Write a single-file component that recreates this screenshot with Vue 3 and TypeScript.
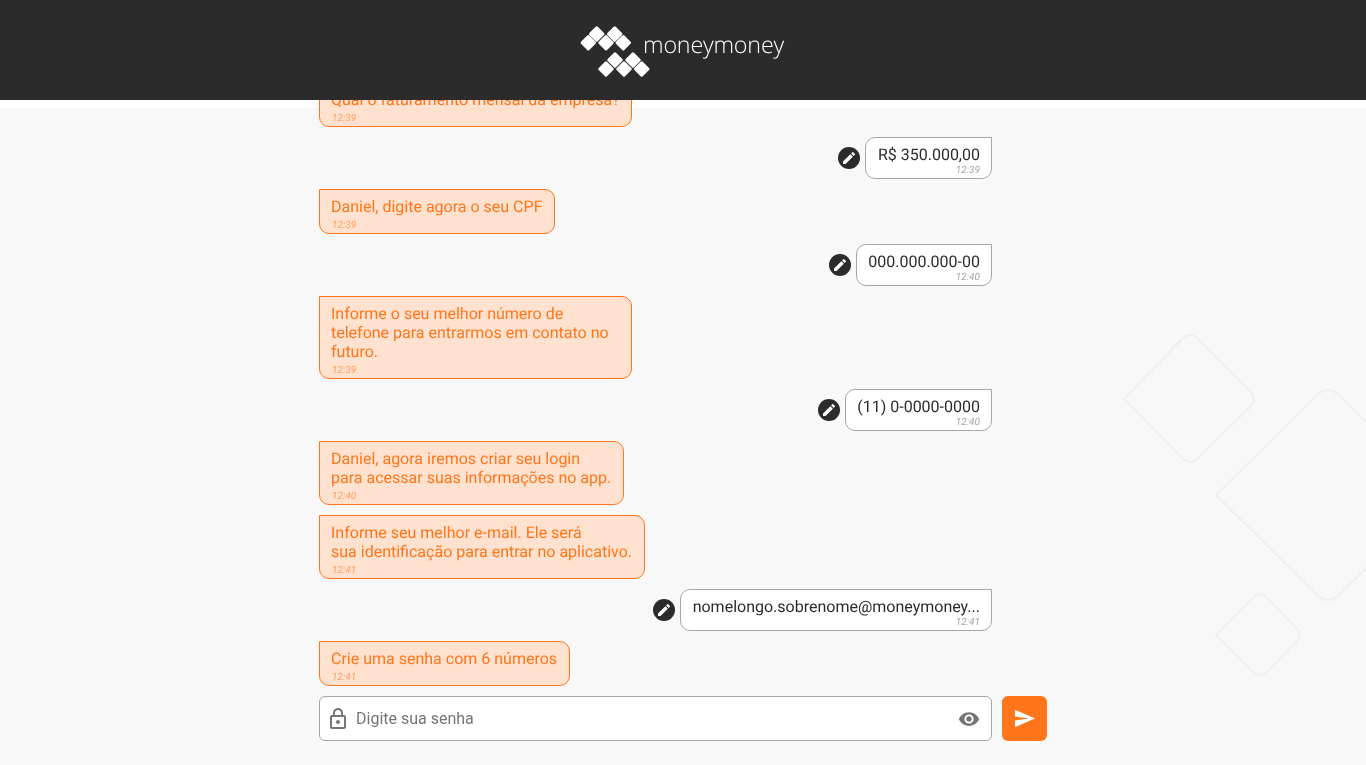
<template>
  <div class="page">
    <header class="topbar">
      <svg class="logo-mark" width="72" height="52" viewBox="580 25 72 52" fill="#fff">
        <rect
          v-for="(d, i) in logoDiamonds"
          :key="i"
          :x="d[0] - 5.9"
          :y="d[1] - 5.9"
          width="11.8"
          height="11.8"
          rx="1.5"
          :transform="`rotate(45 ${d[0]} ${d[1]})`"
        />
      </svg>
      <span class="logo-text">moneymoney</span>
    </header>

    <svg class="backdrop" width="256" height="370" viewBox="0 0 256 370" fill="none" stroke="#efefef" stroke-width="2">
      <path d="M14 79 L72 19 Q80 11 88 19 L140 71 Q148 79 140 87 L88 138 Q80 146 72 138 Z" />
      <path d="M106 175 L206 76 Q218 64 230 76 L330 175 L230 274 Q218 286 206 274 Z" />
      <path d="M106 315 L143 278 Q150 271 157 278 L186 308 Q193 315 186 322 L157 352 Q150 359 143 352 Z" />
    </svg>

    <main class="chat">
      <div class="messages">
        <div v-for="(m, i) in messages" :key="i" class="row" :class="m.from">
          <button v-if="m.from === 'user'" class="edit" type="button">
            <svg width="16" height="16" viewBox="0 0 24 24" fill="#fff">
              <path d="M3 17.25V21h3.75L17.81 9.94l-3.75-3.75L3 17.25zM20.71 7.04c.39-.39.39-1.02 0-1.41l-2.34-2.34c-.39-.39-1.02-.39-1.41 0l-1.83 1.83 3.75 3.75 1.83-1.83z" />
            </svg>
          </button>
          <div class="bubble" :class="{ wrapped: m.wrapped }">
            <div class="text">{{ m.text }}</div>
            <div class="time">{{ m.time }}</div>
          </div>
        </div>
      </div>

      <div class="composer">
        <div class="field">
          <svg class="lock" width="24" height="24" viewBox="0 0 24 24" fill="#757575">
            <path d="M12 17c1.1 0 2-.9 2-2s-.9-2-2-2-2 .9-2 2 .9 2 2 2zm6-9h-1V6c0-2.76-2.24-5-5-5S7 3.24 7 6v2H6c-1.1 0-2 .9-2 2v10c0 1.1.9 2 2 2h12c1.1 0 2-.9 2-2V10c0-1.1-.9-2-2-2zM8.9 6c0-1.71 1.39-3.1 3.1-3.1s3.1 1.39 3.1 3.1v2H8.9V6zM18 20H6V10h12v10z" />
          </svg>
          <input v-model="password" type="password" placeholder="Digite sua senha" />
          <svg class="eye" width="22" height="22" viewBox="0 0 24 24" fill="#757575">
            <path d="M12 4.5C7 4.5 2.73 7.61 1 12c1.73 4.39 6 7.5 11 7.5s9.27-3.11 11-7.5c-1.73-4.39-6-7.5-11-7.5zM12 17c-2.76 0-5-2.24-5-5s2.24-5 5-5 5 2.24 5 5-2.24 5-5 5zm0-8c-1.66 0-3 1.34-3 3s1.34 3 3 3 3-1.34 3-3-1.34-3-3-3z" />
          </svg>
        </div>
        <button class="send" type="button">
          <svg width="23" height="23" viewBox="0 0 24 24" fill="#fff">
            <path d="M2.01 21L23 12 2.01 3 2 10l15 2-15 2z" />
          </svg>
        </button>
      </div>
    </main>
  </div>
</template>

<script setup lang="ts">
import { ref } from 'vue'

interface Message {
  from: 'bot' | 'user'
  text: string
  time: string
  wrapped?: boolean
}

const password = ref('')

const logoDiamonds: number[][] = [
  [597.7, 34],
  [615.7, 34],
  [589.3, 42.7],
  [607, 42.7],
  [624.3, 42.7],
  [616, 60],
  [634, 60],
  [607, 69],
  [625, 69],
  [642.7, 69],
]

const messages: Message[] = [
  { from: 'bot', text: 'Qual o faturamento mensal da empresa?', time: '12:39', wrapped: true },
  { from: 'user', text: 'R$ 350.000,00', time: '12:39' },
  { from: 'bot', text: 'Daniel, digite agora o seu CPF', time: '12:39' },
  { from: 'user', text: '000.000.000-00', time: '12:40' },
  { from: 'bot', text: 'Informe o seu melhor número de telefone para entrarmos em contato no futuro.', time: '12:39', wrapped: true },
  { from: 'user', text: '(11) 0-0000-0000', time: '12:40' },
  { from: 'bot', text: 'Daniel, agora iremos criar seu login\npara acessar suas informações no app.', time: '12:40' },
  { from: 'bot', text: 'Informe seu melhor e-mail. Ele será\nsua identificação para entrar no aplicativo.', time: '12:41' },
  { from: 'user', text: 'nomelongo.sobrenome@moneymoney...', time: '12:41' },
  { from: 'bot', text: 'Crie uma senha com 6 números', time: '12:41' },
]
</script>

<style>
html,
body {
  margin: 0;
  height: 100%;
  background: #f8f8f8;
}
</style>

<style scoped>
.page {
  position: relative;
  display: flex;
  flex-direction: column;
  height: 765px;
  overflow: hidden;
  background: linear-gradient(#fff 108px, #f8f8f8 108px);
  font-family: Roboto, sans-serif;
  text-rendering: geometricPrecision;
}

.topbar {
  position: relative;
  z-index: 2;
  flex: none;
  box-sizing: border-box;
  height: 100px;
  padding-right: 3px;
  display: flex;
  align-items: center;
  justify-content: center;
  background: #2b2b2b;
}

.logo-mark {
  flex: none;
  margin-top: 1px;
}

.logo-text {
  margin-left: -8px;
  margin-top: -12px;
  font-family: 'Open Sans', sans-serif;
  font-weight: 300;
  font-size: 23.3px;
  color: #fff;
  letter-spacing: -0.2px;
  will-change: transform;
}

.backdrop {
  position: absolute;
  top: 320px;
  right: 0;
}

.chat {
  position: relative;
  flex: 1;
  min-height: 0;
  width: 728px;
  margin-left: 319px;
  padding-bottom: 24px;
  display: flex;
  flex-direction: column;
}

.messages {
  flex: 1;
  min-height: 0;
  overflow: hidden;
  width: 673px;
  display: flex;
  flex-direction: column;
  justify-content: flex-end;
  gap: 10px;
  will-change: transform;
}

.row {
  flex: none;
  display: flex;
  align-items: center;
  gap: 5px;
}

.row.user {
  justify-content: flex-end;
}

.bubble {
  box-sizing: border-box;
  border-radius: 10px;
  font-size: 16px;
  line-height: 19px;
}

.bot .bubble {
  padding: 7px 12px 1px 11px;
  background: #ffe1cf;
  border: 1px solid #ff7519;
  border-top-left-radius: 0;
  color: #ff7519;
}

.bot .bubble.wrapped {
  width: 313px;
  padding-right: 8px;
}

.user .bubble {
  padding: 7px 11px 1px 11.5px;
  background: #fff;
  border: 1px solid #a6a6a6;
  border-top-right-radius: 0;
  color: #2b2b2b;
}

.text {
  white-space: pre-line;
}

.time {
  font-size: 10px;
  line-height: 12px;
  font-style: italic;
}

.bot .time {
  margin: 4px 0 0 1px;
  opacity: 0.6;
}

.user .time {
  margin-top: 1px;
  text-align: right;
  color: #a6a6a6;
}

.edit {
  flex: none;
  width: 22px;
  height: 22px;
  padding: 0;
  border: none;
  border-radius: 50%;
  background: #2b2b2b;
  display: flex;
  align-items: center;
  justify-content: center;
}

.composer {
  flex: none;
  margin-top: 10px;
  display: flex;
  gap: 10px;
}

.field {
  box-sizing: border-box;
  width: 673px;
  height: 45px;
  padding: 0 11px 0 6px;
  display: flex;
  align-items: center;
  gap: 4px;
  background: #fff;
  border: 1px solid #a6a6a6;
  border-radius: 6px;
}

.field input {
  flex: 1;
  min-width: 0;
  border: none;
  outline: none;
  background: transparent;
  font-family: Roboto, sans-serif;
  font-size: 16px;
  color: #2b2b2b;
  will-change: transform;
}

.field input::placeholder {
  color: #757575;
}

.lock,
.eye {
  flex: none;
}

.send {
  flex: none;
  width: 45px;
  height: 45px;
  padding: 0;
  border: none;
  border-radius: 6px;
  background: #ff7519;
  display: flex;
  align-items: center;
  justify-content: center;
}
</style>
